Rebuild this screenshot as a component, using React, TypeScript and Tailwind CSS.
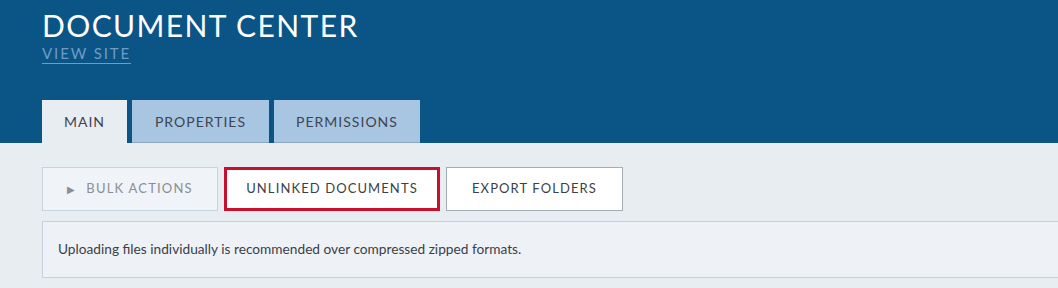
export default function App() {
  const tabs = [
    { label: 'MAIN', active: true, w: 'w-[85px]' },
    { label: 'PROPERTIES', active: false, w: 'w-[137px]' },
    { label: 'PERMISSIONS', active: false, w: 'w-[146px]' },
  ];

  return (
    <div className="w-[1058px] h-[288px] overflow-hidden bg-[#e8edf1] font-['Lato','Noto_Sans',sans-serif]">
      {/* Header */}
      <div className="h-[143px] bg-[#0b5486] pl-[42px] flex flex-col">
        <h1 className="pt-[8px] text-[30px] leading-[34px] text-white tracking-[1.4px] font-normal">
          DOCUMENT CENTER
        </h1>
        <a className="self-start mt-[3px] text-[15px] leading-[16px] tracking-[1.9px] text-[#6f9cc4] border-b border-[#6f9cc4] pb-[2px]">
          VIEW SITE
        </a>
        <div className="mt-auto flex gap-[4px]">
          {tabs.map((t) => (
            <div
              key={t.label}
              className={`${t.w} h-[43px] flex items-center justify-center text-[14px] tracking-[1px] text-[#3f4450] ${
                t.active ? 'bg-[#e8edf1]' : 'bg-[#a8c5e2] border-b border-[#8ba8c6] ml-[1px]'
              }`}
            >
              {t.label}
            </div>
          ))}
        </div>
      </div>

      {/* Actions */}
      <div className="pl-[42px] pt-[24px] flex gap-[6px]">
        <button className="w-[176px] h-[44px] bg-[#f0f3f7] border border-[#c9d3dd] text-[#8a8f96] text-[13px] tracking-[1.2px] flex items-center justify-center gap-[10px]">
          <span className="text-[10px]">&#9654;</span>
          BULK ACTIONS
        </button>
        <button className="w-[216px] h-[44px] bg-white border-[3px] border-[#c8102e] text-[#3a3f48] text-[13px] tracking-[1.1px] flex items-center justify-center">
          UNLINKED DOCUMENTS
        </button>
        <button className="w-[177px] h-[44px] bg-white border border-[#a3adb8] text-[#3a3f48] text-[13px] tracking-[1.1px] flex items-center justify-center">
          EXPORT FOLDERS
        </button>
      </div>

      {/* Notice */}
      <div className="ml-[42px] mt-[10px] w-[1030px] h-[57px] bg-[#eef2f7] border border-[#c3d1de] pl-[15px] flex items-center text-[13.7px] text-[#3a3f48]">
        Uploading files individually is recommended over compressed zipped formats.
      </div>
    </div>
  );
}
